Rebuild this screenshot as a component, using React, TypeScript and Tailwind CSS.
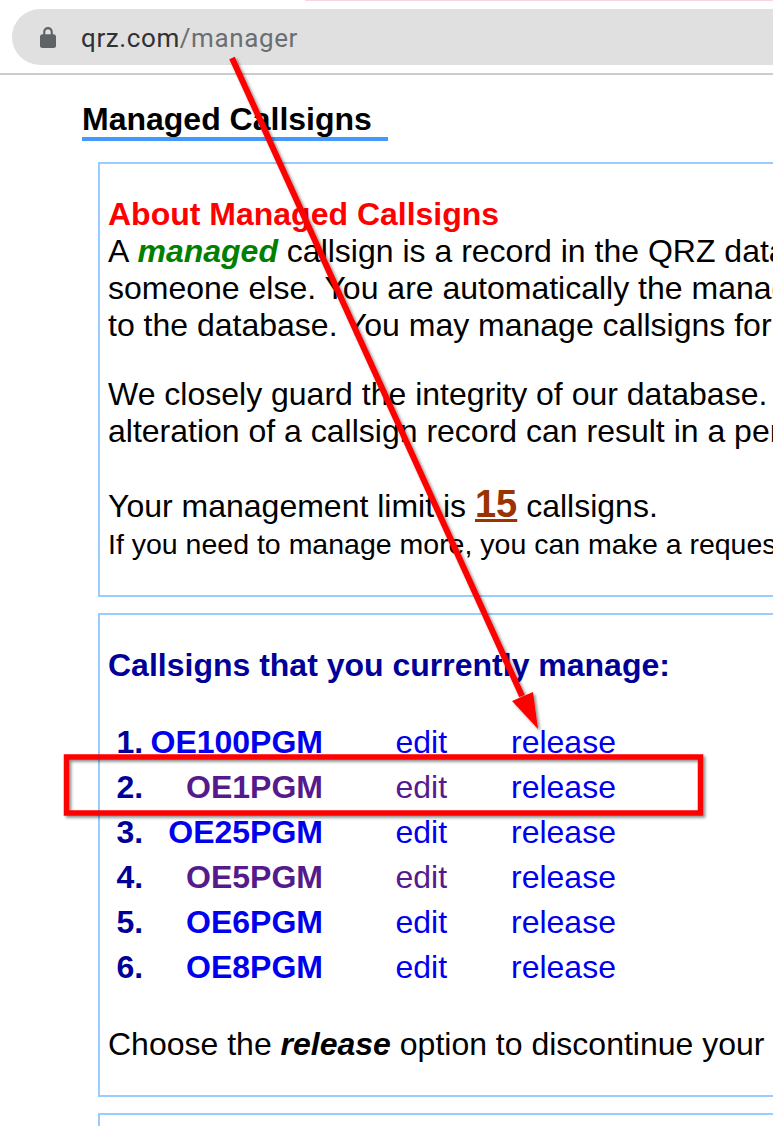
import React from 'react';

const rows = [
  { n: '1.', call: 'OE100PGM', callSeen: false, editSeen: false },
  { n: '2.', call: 'OE1PGM', callSeen: true, editSeen: true },
  { n: '3.', call: 'OE25PGM', callSeen: false, editSeen: false },
  { n: '4.', call: 'OE5PGM', callSeen: true, editSeen: true },
  { n: '5.', call: 'OE6PGM', callSeen: false, editSeen: false },
  { n: '6.', call: 'OE8PGM', callSeen: false, editSeen: false },
];

export default function App() {
  return (
    <div className="relative h-[1126px] w-[773px] overflow-hidden bg-white font-['Liberation_Sans',Arial,sans-serif] text-[32px] leading-[37px] text-black">
      {/* Browser chrome */}
      <div className="ml-[305px] h-px bg-[#f8d3e4]" />
      <div className="mt-2 ml-3 flex h-[56px] items-center rounded-l-[28px] bg-[#e0e0e0]">
        <svg className="ml-[28px] h-[21px] w-4 text-[#5f6368]" viewBox="0 0 16 21" fill="currentColor">
          <path d="M8 0C5.2 0 3.2 2.2 3.2 5v2.2H2.4C1.1 7.2 0 8.200 0 9.500v9.200C0 20 1.100 21 2.400 21h11.200c1.300 0 2.400-1 2.400-2.300V9.500c0-1.300-1.100-2.300-2.400-2.300h-.8V5C12.800 2.200 10.800 0 8 0zm0 2.200c1.600 0 2.700 1.200 2.700 2.800v2.200H5.300V5c0-1.600 1.100-2.800 2.700-2.800z" />
        </svg>
        <div className="mt-[1px] ml-[25px] font-['Roboto',sans-serif] text-[26px] leading-[32px] tracking-[0.6px]">
          <span className="text-[#303134]">qrz.com</span>
          <span className="text-[#6b6e72]">/manager</span>
        </div>
      </div>
      <div className="mt-2 h-0.5 bg-[#cccccc]" />

      <main className="pl-[82px]">
        <div className="mt-[26px] w-[306px] border-b-4 border-[#4499ff] text-[32px] leading-[36px] font-bold whitespace-nowrap">
          Managed Callsigns
        </div>

        <div className="mt-[21px] ml-4 flex w-[800px] flex-col gap-4 whitespace-nowrap">
          <section className="h-[435px] border-2 border-[#99ccff] pt-[32px] pl-2">
            <div className="font-bold text-[#ff0000]">About Managed Callsigns</div>
            <div>
              A <b className="ml-px text-[#008000] italic">managed</b> callsign is a record in the QRZ database
            </div>
            <div>someone else. You are automatically the manager</div>
            <div>to the database. You may manage callsigns for</div>
            <div className="mt-[32px]">We closely guard the integrity of our database.</div>
            <div>alteration of a callsign record can result in a penalty</div>
            <div className="mt-[36px] flex items-baseline">
              Your management limit is&nbsp;
              <b className="text-[38px] text-[#993300] underline">15</b>
              &nbsp;callsigns.
            </div>
            <div className="mt-[1px] text-[28.5px]">If you need to manage more, you can make a request</div>
          </section>

          <section className="h-[484px] border-2 border-[#99ccff] pt-[32px] pl-2">
            <div className="font-bold text-[#000099]">Callsigns that you currently manage:</div>
            <div className="mt-[36px] grid grid-cols-[215px_115px_1fr]">
              {rows.map((row) => (
                <div key={row.n} className="col-span-3 grid h-[45px] grid-cols-subgrid items-center">
                  <div className="flex justify-between pl-[8.5px]">
                    <b className="text-[#000099]">{row.n}</b>
                    <b className={row.callSeen ? 'text-[#551a8b]' : 'text-[#0000ee]'}>{row.call}</b>
                  </div>
                  <span className={`pl-[72.5px] ${row.editSeen ? 'text-[#551a8b]' : 'text-[#0000ee]'}`}>edit</span>
                  <span className="pl-[73px] text-[#0000ee]">release</span>
                </div>
              ))}
            </div>
            <div className="mt-[36px]">
              Choose the <b className="italic">release</b> option to discontinue your management
            </div>
          </section>

          <section className="h-[60px] border-2 border-[#99ccff]" />
        </div>
      </main>

      {/* Annotation laid over the screenshot */}
      <svg className="pointer-events-none absolute top-0 left-0" width="773" height="1126" viewBox="0 0 773 1126" fill="none">
        <defs>
          <filter id="drop" x="-10%" y="-10%" width="120%" height="120%">
            <feDropShadow dx="2" dy="2" stdDeviation="1.500" floodColor="#000000" floodOpacity="0.45" />
          </filter>
        </defs>
        <g filter="url(#drop)">
          <line x1="232" y1="58" x2="522" y2="696" stroke="#ff0000" strokeWidth="6" />
          <polygon points="538,729 512,701 533,692" fill="#ff0000" />
          <rect x="66.500" y="757" width="634" height="56" stroke="#ff0000" strokeWidth="5.500" />
        </g>
      </svg>
    </div>
  );
}
